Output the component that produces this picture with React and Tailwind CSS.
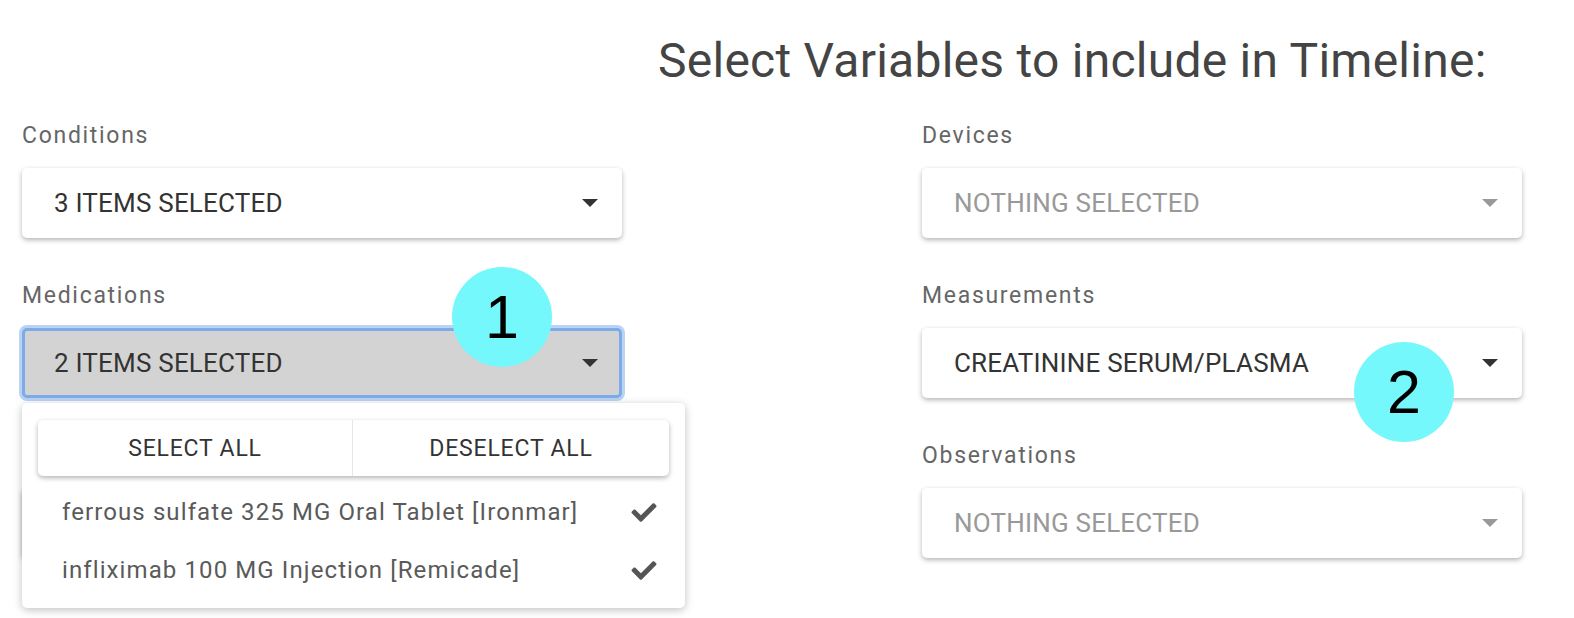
import React from "react";
import clsx from "clsx";
import { FaCheck } from "react-icons/fa";

const Caret = ({ muted }) => (
  <span
    className={clsx(
      "w-0 h-0 border-x-[8px] border-x-transparent border-t-[8px]",
      muted ? "border-t-[#999]" : "border-t-[#333]"
    )}
  />
);

const SelectBox = ({ value, active, hidden, children }) => (
  <div
    className={clsx(
      "relative flex items-center justify-between h-[70px] rounded-[5px] text-[26px] leading-none tracking-[0.2px]",
      active
        ? "bg-[#d3d3d3] border-[3px] border-[#7eaaea] pl-[29px] pr-[21px] ring-[3px] ring-[#b9d3f5]"
        : "bg-white pl-[32px] pr-[24px] shadow-[0_2px_5px_rgba(0,0,0,0.3)]"
    )}
  >
    {!hidden && (
      <>
        <span className={value ? "text-[#333]" : "text-[#999]"}>
          {value || "NOTHING SELECTED"}
        </span>
        <Caret muted={!value} />
      </>
    )}
    {children}
  </div>
);

const Field = ({ label, value, active, hidden, children }) => (
  <div className="flex flex-col">
    <div className="h-[23px] text-[23px] leading-[23px] tracking-[1.7px] text-[#666] mb-[21px]">{label}</div>
    <SelectBox value={value} active={active} hidden={hidden}>
      {children}
    </SelectBox>
  </div>
);

const meds = [
  "ferrous sulfate 325 MG Oral Tablet [Ironmar]",
  "infliximab 100 MG Injection [Remicade]",
];

const Menu = () => (
  <div className="absolute left-[-3px] top-[72px] w-[663px] z-10 bg-white rounded-[5px] shadow-[0_2px_8px_rgba(0,0,0,0.25)] pt-[17px] px-[16px] pb-[9px] tracking-normal">
    {/* select / deselect */}
    <div className="flex h-[56px] rounded-[5px] shadow-[0_2px_5px_rgba(0,0,0,0.3)] mb-[7px] text-[23px] tracking-[0.8px] text-[#333]">
      <button className="w-[315px] flex items-center justify-center border-r border-[#e6e6e6]">
        SELECT ALL
      </button>
      <button className="flex-1 flex items-center justify-center">DESELECT ALL</button>
    </div>
    {meds.map((m) => (
      <div key={m} className="flex items-center justify-between h-[58px] pl-[24px] pr-[11px] text-[24px] tracking-[1.1px] text-[#5a5a5a]">
        <span>{m}</span>
        <FaCheck className="w-[28px] h-[25px] text-[#555]" />
      </div>
    ))}
  </div>
);

const Badge = ({ n, className }) => (
  <div
    className={clsx(
      "absolute z-20 w-[100px] h-[100px] rounded-full bg-[#75f8fb] flex items-center justify-center text-[61px] leading-none text-black font-['Liberation_Sans',Arial,sans-serif]",
      className
    )}
  >
    {n}
  </div>
);

export default function App() {
  return (
    <div className="relative min-h-[618px] bg-white pt-[37px] px-[22px] font-['Roboto',sans-serif]">
      <h1 className="pl-[636px] text-[48px] leading-[48px] tracking-[0.25px] text-[#444]">
        Select Variables to include in Timeline:
      </h1>

      <div className="mt-[39px] flex gap-[300px]">
        <div className="w-[600px] flex flex-col gap-[46px]">
          <Field label="Conditions" value="3 ITEMS SELECTED" />
          <Field label="Medications" value="2 ITEMS SELECTED" active>
            <Menu />
          </Field>
          {/* covered by the open menu */}
          <Field hidden />
        </div>
        <div className="w-[600px] flex flex-col gap-[46px]">
          <Field label="Devices" />
          <Field label="Measurements" value="CREATININE SERUM/PLASMA" />
          <Field label="Observations" />
        </div>
      </div>

      <Badge n="1" className="left-[452px] top-[267px]" />
      <Badge n="2" className="left-[1354px] top-[342px]" />
    </div>
  );
}
